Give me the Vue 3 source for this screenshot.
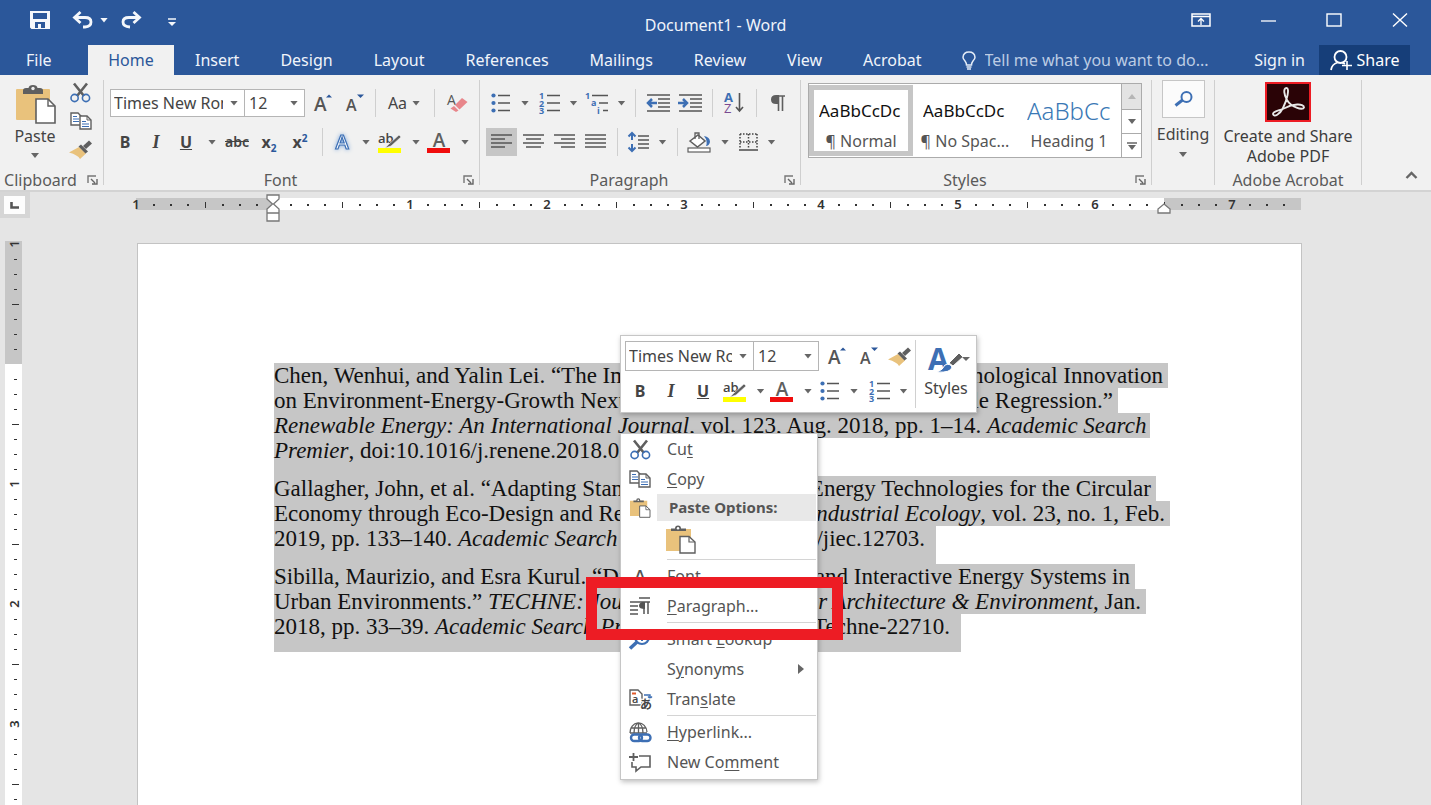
<script setup>
import { h } from 'vue'

const BLUE = '#2b579a'
const MID = '#3d6fb4'
const GREY = '#5f5f5f'
const TAN = '#e9c27c'

const scissors = `<g fill="none" stroke-linecap="butt"><path d="M4 0.5 14 13M17 0.5 7 13" stroke="${GREY}" stroke-width="2.6"/><circle cx="4.6" cy="15" r="3.6" stroke="${MID}" stroke-width="1.6"/><circle cx="16" cy="15" r="3.6" stroke="${MID}" stroke-width="1.6"/></g>`
const copy = `<path d="M1 1H8L11 4V13H1Z" fill="#fff" stroke="${GREY}" stroke-width="1.4"/><path d="M3 4.5H7M3 7H9M3 9.5H9" stroke="${MID}" stroke-width="1.2"/><path d="M10 4H17L21 8V17H10Z" fill="#fff" stroke="${GREY}" stroke-width="1.4"/><path d="M17 4V8H21" fill="none" stroke="${GREY}"/><path d="M12 9.5H16M12 12H19M12 14.5H19" stroke="${MID}" stroke-width="1.2"/>`
const clipboard = `<rect x="1" y="4" width="34" height="31" rx="1" fill="${TAN}"/><path d="M8 9V5.500Q8 3 11 3H13.500Q14 0 18 0T22.500 3H25Q28 3 28 5.500V9Z" fill="${GREY}"/><circle cx="18" cy="3.500" r="1.700" fill="#eee"/><path d="M21 14H33L40 21V38H21Z" fill="#fff" stroke="${GREY}" stroke-width="1.6"/><path d="M33 14V21H40" fill="none" stroke="${GREY}" stroke-width="1.4"/>`
const clipboardOpen = `<path d="M1 4H26V14H16V26H1Z" fill="${TAN}"/><path d="M6 6V3.500H10Q10 .5 13 .5T16 3.500H21V6Z" fill="${GREY}"/><circle cx="13" cy="3.300" r="1.200" fill="#fff"/><path d="M15 11.500H24L30 17V28H15Z" fill="#fff" stroke="${GREY}" stroke-width="1.4"/><path d="M24 11.500V17H30" fill="none" stroke="${GREY}" stroke-width="1.2"/>`
const brush = `<path d="M0 12.500 10 7 17 13.500 11 19Q9 15 0 12.500Z" fill="${TAN}"/><path d="M9.500 6.500 12 4.500 19 11.500 16.500 13.500Z" fill="${GREY}"/><path d="M14 6 20 0.500 23 3.500 17 9Z" fill="${GREY}"/>`
const highlighter = `<text x="1" y="11" font-family="Open Sans, sans-serif" font-size="13" font-weight="600" fill="#444">ab</text><path d="M22 3 24 5 14 14 8 16 12 12Z" fill="${GREY}" stroke="#f0f0f0" stroke-width=".6"/><rect x="1" y="16" width="23" height="5" fill="#ffff00"/>`
const fontColor = `<text x="12" y="15" text-anchor="middle" font-family="Open Sans, sans-serif" font-size="19" font-weight="600" fill="${GREY}">A</text><rect x="0" y="16" width="23" height="5" fill="#f00d0d"/>`
const bullets = `<g fill="${MID}"><circle cx="2.500" cy="2.500" r="2.100"/><circle cx="2.500" cy="10" r="2.100"/><circle cx="2.500" cy="17.500" r="2.100"/></g><path d="M7 2.500H19M7 10H19M7 17.500H19" stroke="#555" stroke-width="1.5"/>`
const numbering = `<g font-family="Open Sans, sans-serif" font-size="9" font-weight="700" fill="${MID}"><text x="0" y="6">1</text><text x="0" y="13.500">2</text><text x="0" y="21">3</text></g><path d="M8 2.500H21M8 10H21M8 17.500H21" stroke="#555" stroke-width="1.5"/>`
const growA = `<text x="0" y="18" font-family="Open Sans, sans-serif" font-size="19" font-weight="600" fill="#555">A</text><path d="M12 4.500 15 1.500 18 4.500Z" fill="${BLUE}"/>`
const shrinkA = `<text x="0" y="18" font-family="Open Sans, sans-serif" font-size="16" font-weight="600" fill="#555">A</text><path d="M11 1.500H18L14.500 5Z" fill="${BLUE}"/>`

const icons = {
  save: [20, 18, `<path fill="#f4f7fb" fill-rule="evenodd" d="M0 0H20V18H1.500L0 16.500ZM3 2V8H17V2ZM5 11V17H8V13H11V17H15V11Z"/>`],
  undo: [21, 18, `<path d="M2 6.500H13Q19 6.500 19 11T13 16H11" fill="none" stroke="#f4f7fb" stroke-width="2.8"/><path d="M8.500 1 2.500 6.500 8.500 12" fill="none" stroke="#f4f7fb" stroke-width="2.8"/>`],
  redo: [21, 18, `<path d="M19 6.500H8Q2 6.500 2 11T9 16" fill="none" stroke="#f4f7fb" stroke-width="2.800"/><path d="M12.500 1 18.500 6.500 12.500 12" fill="none" stroke="#f4f7fb" stroke-width="2.800"/>`],
  custom: [8, 8, `<path d="M0 1H8" stroke="#f4f7fb" stroke-width="1.500"/><path d="M0 4H8L4 8Z" fill="#f4f7fb"/>`],
  ribbonOpt: [20, 14, `<path d="M1 1H19V13H1ZM1 3.500H19" fill="none" stroke="#fff" stroke-width="1.500"/><path d="M10 12V6M7 8.500 10 5.500 13 8.500" fill="none" stroke="#fff" stroke-width="1.300"/>`],
  minimise: [15, 14, `<path d="M0 8H15" stroke="#fff" stroke-width="1.300"/>`],
  maximise: [16, 14, `<rect x="1" y="1" width="14" height="12" fill="none" stroke="#fff" stroke-width="1.400"/>`],
  close: [16, 14, `<path d="M1 .5 15 13.500M15 .5 1 13.500" stroke="#fff" stroke-width="1.400"/>`],
  bulb: [14, 19, `<path d="M4.500 14Q4.500 12 3 10Q1 8 1 6.200Q1.500 1 7 1T13 6.200Q13 8 11 10Q9.500 12 9.500 14Z" fill="none" stroke="#e4ecf7" stroke-width="1.500"/><path d="M4.500 16H9.500M5 18H9" stroke="#e4ecf7" stroke-width="1.300"/>`],
  person: [22, 21, `<circle cx="10.500" cy="7" r="6" fill="none" stroke="#fff" stroke-width="1.800"/><path d="M1 20Q2 14 7.500 12.500M12 12.500 15 14" fill="none" stroke="#fff" stroke-width="1.800"/><path d="M17 11V20M12 15.500H22" stroke="#fff" stroke-width="1.600"/>`],
  paste: [41, 39, clipboard],
  pasteKeep: [31, 29, clipboardOpen],
  cut: [21, 19, scissors],
  copy: [22, 18, copy],
  brush: [23, 19, brush],
  growA: [19, 20, growA],
  shrinkA: [19, 20, shrinkA],
  eraser: [21, 20, `<text x="0" y="12" font-family="Open Sans, sans-serif" font-size="14" fill="#555">A</text><path d="M8 12 15 5 20.500 9 12.500 16.500Z" fill="#e8868b"/><path d="M7 13 11.500 17.500 9 19 3.500 15.500Z" fill="#e8868b"/>`],
  effects: [20, 20, `<text x="10" y="17" text-anchor="middle" font-family="Open Sans, sans-serif" font-size="20" font-weight="600" fill="#fff" stroke="${MID}" stroke-width="1.200" style="filter:drop-shadow(0 0 2px #7fa8dc)">A</text>`],
  highlight: [25, 21, highlighter],
  fontColor: [24, 21, fontColor],
  bullets: [20, 20, bullets],
  numbering: [21, 21, numbering],
  multilevel: [23, 21, `<g font-family="Open Sans, sans-serif" font-size="9" font-weight="700" fill="${MID}"><text x="0" y="6">1</text><text x="6" y="13">a</text><text x="12" y="21">i</text></g><path d="M7 2.500H23M14 10H23M18 17.500H23" stroke="#555" stroke-width="1.500"/>`],
  outdent: [24, 18, `<path d="M1 1H24M12 5H24M12 9H24M12 13H24M1 17H24" stroke="#555" stroke-width="1.500"/><path d="M11 9H3M6 5 2 9 6 13" fill="none" stroke="${MID}" stroke-width="2.500"/>`],
  indent: [24, 18, `<path d="M1 1H24M12 5H24M12 9H24M12 13H24M1 17H24" stroke="#555" stroke-width="1.500"/><path d="M0 9H9M5 5 9 9 5 13" fill="none" stroke="${MID}" stroke-width="2.500"/>`],
  sort: [20, 22, `<text x="0" y="10" font-family="Open Sans, sans-serif" font-size="13" font-weight="700" fill="${MID}">A</text><text x="0" y="21" font-family="Open Sans, sans-serif" font-size="13" fill="#7a4a91">Z</text><path d="M15.500 1V19M12 15 15.500 19 19 15" fill="none" stroke="#555" stroke-width="1.600"/>`],
  pilcrow: [14, 16, `<path d="M6 1H14M7.500 1V16M11.500 1V16" fill="none" stroke="${GREY}" stroke-width="1.600"/><path d="M8 0H5Q0 0 0 4.500T5 9H8Z" fill="${GREY}"/>`],
  left: [21, 16, `<path d="M0 1H21M0 5H14M0 9H21M0 13H14" stroke="#555" stroke-width="1.500"/>`],
  center: [21, 16, `<path d="M0 1H21M3 5H18M0 9H21M3 13H18" stroke="#555" stroke-width="1.500"/>`],
  right: [21, 16, `<path d="M0 1H21M7 5H21M0 9H21M7 13H21" stroke="#555" stroke-width="1.500"/>`],
  justify: [21, 16, `<path d="M0 1H21M0 5H21M0 9H21M0 13H21" stroke="#555" stroke-width="1.500"/>`],
  spacing: [21, 20, `<path d="M4 1V8M4 12V19M.5 4.500 4 1 7.500 4.500M.5 15.500 4 19 7.500 15.500" fill="none" stroke="${MID}" stroke-width="2"/><path d="M10 4H21M10 8H21M10 12H21M10 16H21" stroke="#555" stroke-width="1.500"/>`],
  bucket: [24, 21, `<path d="M3 9 11 3 18 9 10.500 15Z" fill="#fff" stroke="${GREY}" stroke-width="1.500"/><path d="M8 7V1H12V7" fill="none" stroke="${GREY}" stroke-width="1.300"/><path d="M17 4Q23 5 23 10Q22 14 19 14Q21 9 17 4Z" fill="${MID}"/><rect x="1" y="16" width="22" height="4" fill="#fff" stroke="${GREY}" stroke-width="1.200"/>`],
  borders: [19, 18, `<path d="M1 1H19M1 9H19M1 1V16M9.500 1V16M18 1V16" fill="none" stroke="#444" stroke-width="1.500" stroke-dasharray="1.500 1.500"/><path d="M0 17H19" stroke="#555" stroke-width="1.600"/>`],
  up: [8, 5, `<path d="M0 5H8L4 0Z" fill="#b5b5b5"/>`],
  down: [8, 5, `<path d="M0 0H8L4 5Z" fill="#666"/>`],
  more: [10, 8, `<path d="M0 1H10" stroke="#666" stroke-width="1.500"/><path d="M1 3H9L5 8Z" fill="#666"/>`],
  find: [19, 16, `<circle cx="12.500" cy="6" r="5" fill="none" stroke="${MID}" stroke-width="2"/><path d="M8.500 9 1.500 14.500" stroke="${MID}" stroke-width="3"/>`],
  acrobat: [46, 40, `<rect x="1" y="1" width="44" height="38" fill="#2a0306" stroke="#ed1c24" stroke-width="2"/><path d="M21.500 6C18 6 19 13 22 18C26 25 38 29 39 25.500C39 21 27 22 20 26C14 29 8 29 8 32C9 36 15 32 18 26C22 18 25 6 21.500 6Z" fill="none" stroke="#e8e8e8" stroke-width="1.900"/>`],
  launcher: [11, 10, `<path d="M1 8V1H9" fill="none" stroke="#777" stroke-width="1.400"/><path d="M4 4 8 8M10 4V9H5" fill="none" stroke="#666" stroke-width="1.400"/>`],
  collapse: [13, 8, `<path d="M1.500 7 6.500 2 11.500 7" fill="none" stroke="#666" stroke-width="2.400"/>`],
  tabStop: [9, 7, `<path d="M1.500 0V5.500H9" fill="none" stroke="#555" stroke-width="2.600"/>`],
  stylesBig: [42, 29, `<text x="0" y="25" font-family="Open Sans, sans-serif" font-size="30" font-weight="700" fill="${MID}">A</text><path d="M31 8 35 12 25 21 21 18Z" fill="${GREY}" stroke="#fff"/><path d="M9 27Q15 25 17 20Q22 18 24 22Q23 28 9 27Z" fill="${MID}" stroke="#fff"/><path d="M34 12H42L38 16Z" fill="#666"/>`],
  letterA: [18, 18, `<text x="3" y="16" font-family="Open Sans, sans-serif" font-size="18" font-weight="600" fill="#555">A</text>`],
  paragraph: [20, 18, `<path d="M9 1H20M0 5H20M0 9H8M0 13H8M0 17H8" stroke="#555" stroke-width="1.400"/><path d="M14 5V17M18 5V17" stroke="#555" stroke-width="1.500"/><path d="M15 5H12Q9 6 9 9T15 12Z" fill="#555"/>`],
  lookup: [23, 21, `<circle cx="13" cy="8" r="7" fill="none" stroke="${MID}" stroke-width="2.200"/><path d="M8 13 1 19.500" stroke="${MID}" stroke-width="3.500"/><path d="M13 7V12M13 4V5.500" stroke="${MID}" stroke-width="2"/>`],
  translate: [23, 21, `<path d="M1 1H9L13 5V16H1Z" fill="#fff" stroke="${GREY}" stroke-width="1.400"/><path d="M3 4.500H7" stroke="#e05a2b" stroke-width="2"/><text x="3" y="14" font-family="Open Sans, sans-serif" font-size="11" font-weight="600" fill="#444">a</text><path d="M15 6H21V9M19 7.500 21 9.500 23 7.500" fill="none" stroke="${MID}" stroke-width="1.400"/><text x="11" y="20" font-family="Noto Sans CJK JP, sans-serif" font-size="12" font-weight="700" fill="#444" stroke="#fff" stroke-width="2" paint-order="stroke">あ</text>`],
  link: [23, 21, `<g fill="none" stroke="${GREY}" stroke-width="1.300"><path d="M1 11A8 9 0 0 1 18 10M1.500 6H17M1 11H18M9.500 1V11M5 11Q5 3 9.500 1Q14 3 14 11"/></g><g fill="none" stroke="${MID}" stroke-width="2.400"><rect x="2" y="12.500" width="11" height="6.500" rx="3.200"/><rect x="10" y="12.500" width="11.500" height="6.500" rx="3.200"/></g>`],
  comment: [22, 19, `<path d="M10 3H21V14H12L7 18V14H3V9" fill="none" stroke="${GREY}" stroke-width="1.600"/><path d="M4.500 0V8M0 4H9" stroke="${GREY}" stroke-width="1.800"/>`],
  submenu: [6, 10, `<path d="M0 0 6 5 0 10Z" fill="#666"/>`],
  indentTop: [14, 28, `<path d="M1 1H13V5L7.500 10 13 15V27H1V15L6.500 10 1 5ZM1 19H13" fill="#fff" stroke="#777" stroke-width="1.300"/>`],
  indentRight: [14, 11, `<path d="M7 1 13 6V10H1V6Z" fill="#fff" stroke="#777" stroke-width="1.300"/>`]
}

const Icon = (props) => {
  const [w, ht, body] = icons[props.name]
  return h('svg', { width: w, height: ht, viewBox: `0 0 ${w} ${ht}`, 'aria-hidden': 'true', innerHTML: body })
}
Icon.props = ['name']

const tabs = ['Insert', 'Design', 'Layout', 'References', 'Mailings', 'Review', 'View', 'Acrobat']

const paraTop = [
  { icon: 'bullets', caret: true, label: 'Bullets' },
  { icon: 'numbering', caret: true, label: 'Numbering' },
  { icon: 'multilevel', caret: true, label: 'Multilevel list' },
  {},
  { icon: 'outdent', label: 'Decrease indent' },
  { icon: 'indent', label: 'Increase indent' },
  {},
  { icon: 'sort', label: 'Sort' },
  {},
  { icon: 'pilcrow', label: 'Show marks' }
]
const paraBottom = [
  { icon: 'left', label: 'Align left', on: true },
  { icon: 'center', label: 'Center' },
  { icon: 'right', label: 'Align right' },
  { icon: 'justify', label: 'Justify' },
  {},
  { icon: 'spacing', caret: true, label: 'Line spacing' },
  {},
  { icon: 'bucket', caret: true, label: 'Shading' },
  { icon: 'borders', caret: true, label: 'Borders' }
]
const styleItems = [
  { name: '¶ Normal', on: true },
  { name: '¶ No Spac...' },
  { name: 'Heading 1', heading: true }
]

const paragraphs = [
  [
    { width: 894, left: 'Chen, Wenhui, and Yalin Lei. “The Im', right: 'Technological Innovation' },
    { width: 844, left: 'on Environment-Energy-Growth Nexus', right: 'Quantile Regression.”' },
    { width: 876, left: '<i>Renewable Energy: An International Journal</i>, vol. 123, Aug. 2018, pp. 1–14. <i>Academic Search</i>', right: '' },
    { width: 500, left: '<i>Premier</i>, doi:10.1016/j.renene.2018.02', right: '' }
  ],
  [
    { width: 882, left: 'Gallagher, John, et al. “Adapting Stand', right: 'Energy Technologies for the Circular' },
    { width: 896, left: 'Economy through Eco-Design and Rec', right: '<i>Industrial Ecology</i>, vol. 23, no. 1, Feb.' },
    { width: 662, left: '2019, pp. 133–140. <i>Academic Search P</i>', right: '/jiec.12703.' }
  ],
  [
    { width: 861, left: 'Sibilla, Maurizio, and Esra Kurul. “Dis', right: 'and Interactive Energy Systems in' },
    { width: 872, left: 'Urban Environments.” <i>TECHNE: Jour</i>', right: '<i>for Architecture &amp; Environment</i>, Jan.' },
    { width: 687, left: '2018, pp. 33–39. <i>Academic Search Pre</i>', right: 'Techne-22710.' }
  ]
]

const INCH = 137
const hTicks = []
for (let i = -8; i <= 59; i++) {
  if (i === 0) continue
  const x = 137 + Math.round((i * INCH) / 8)
  hTicks.push({ x, kind: i % 8 === 0 ? 'num' : i % 4 === 0 ? 'half' : 'dot', n: Math.abs(i / 8) })
}
const vTicks = []
for (let i = -8; i <= 60; i++) {
  if (i === 0) continue
  vTicks.push({ y: 123 + i * 15, kind: i % 8 === 0 ? 'num' : i % 4 === 0 ? 'half' : 'dot', n: Math.abs(i / 8) })
}
</script>

<template>
  <div class="word">
    <header class="titlebar">
      <div class="quick">
        <button aria-label="Save"><Icon name="save" /></button>
        <button class="undo" aria-label="Undo"><Icon name="undo" /><span class="caret light"></span></button>
        <button aria-label="Redo"><Icon name="redo" /></button>
        <button class="customise" aria-label="Customize toolbar"><Icon name="custom" /></button>
      </div>
      <div class="title">Document1 - Word</div>
      <div class="window">
        <button aria-label="Ribbon options"><Icon name="ribbonOpt" /></button>
        <button aria-label="Minimize"><Icon name="minimise" /></button>
        <button aria-label="Maximize"><Icon name="maximise" /></button>
        <button aria-label="Close"><Icon name="close" /></button>
      </div>
    </header>

    <nav class="tabs">
      <button class="file">File</button>
      <button class="home">Home</button>
      <button v-for="t in tabs" :key="t" class="tab">{{ t }}</button>
      <label class="tell"><Icon name="bulb" /><input type="text" aria-label="Tell me" placeholder="Tell me what you want to do..." /></label>
      <button class="sign">Sign in</button>
      <button class="share"><Icon name="person" />Share</button>
    </nav>

    <section class="ribbon">
      <div class="group clip">
        <div class="body clip-body">
          <button class="paste"><Icon name="paste" /><span>Paste</span><span class="caret"></span></button>
          <div class="clip-tools">
            <button aria-label="Cut"><Icon name="cut" /></button>
            <button aria-label="Copy"><Icon name="copy" /></button>
            <button aria-label="Format painter"><Icon name="brush" /></button>
          </div>
        </div>
        <div class="foot"><span>Clipboard</span><button class="launch" aria-label="Clipboard settings"><Icon name="launcher" /></button></div>
      </div>

      <div class="group font">
        <div class="body">
          <div class="row font-top">
            <div class="combo"><select aria-label="Font"><option>Times New Roman</option></select><span class="caret"></span></div>
            <div class="combo second"><select aria-label="Font size"><option>12</option></select><span class="caret"></span></div>
            <button aria-label="Grow font"><Icon name="growA" /></button>
            <button aria-label="Shrink font"><Icon name="shrinkA" /></button>
            <span class="sep"></span>
            <button class="tight">Aa<span class="caret"></span></button>
            <span class="sep"></span>
            <button aria-label="Clear formatting"><Icon name="eraser" /></button>
          </div>
          <div class="row font-bottom">
            <button><b>B</b></button>
            <button><i class="ital">I</i></button>
            <button class="wide"><b><u>U</u></b><span class="caret"></span></button>
            <button class="strike"><s>abc</s></button>
            <button><b>x<sub>2</sub></b></button>
            <button><b>x<sup>2</sup></b></button>
            <span class="sep"></span>
            <button aria-label="Text effects"><Icon name="effects" /><span class="caret"></span></button>
            <button aria-label="Highlight"><Icon name="highlight" /><span class="caret"></span></button>
            <button aria-label="Font color"><Icon name="fontColor" /><span class="caret"></span></button>
          </div>
        </div>
        <div class="foot"><span>Font</span><button class="launch" aria-label="Font settings"><Icon name="launcher" /></button></div>
      </div>

      <div class="group para">
        <div class="body">
          <div class="row para-top">
            <template v-for="(t, i) in paraTop" :key="i">
              <button v-if="t.icon" :aria-label="t.label"><Icon :name="t.icon" /><span v-if="t.caret" class="caret"></span></button>
              <span v-else class="sep"></span>
            </template>
          </div>
          <div class="row para-bottom">
            <template v-for="(t, i) in paraBottom" :key="i">
              <button v-if="t.icon" :class="{ on: t.on }" :aria-label="t.label"><Icon :name="t.icon" /><span v-if="t.caret" class="caret"></span></button>
              <span v-else class="sep"></span>
            </template>
          </div>
        </div>
        <div class="foot"><span>Paragraph</span><button class="launch" aria-label="Paragraph settings"><Icon name="launcher" /></button></div>
      </div>

      <div class="group styles">
        <div class="body">
          <div class="gallery">
            <button v-for="s in styleItems" :key="s.name" class="style" :class="{ on: s.on }">
              <span class="sample" :class="{ heading: s.heading }">AaBbCcDc</span>
              <span class="name">{{ s.name }}</span>
            </button>
            <div class="scroll">
              <button class="off" aria-label="Scroll up"><Icon name="up" /></button>
              <button aria-label="Scroll down"><Icon name="down" /></button>
              <button aria-label="More styles"><Icon name="more" /></button>
            </div>
          </div>
        </div>
        <div class="foot"><span>Styles</span><button class="launch" aria-label="Styles settings"><Icon name="launcher" /></button></div>
      </div>

      <div class="group editing">
        <button class="edit"><span class="box"><Icon name="find" /></span><span>Editing</span><span class="caret"></span></button>
      </div>

      <div class="group adobe">
        <button class="body pdf"><Icon name="acrobat" /><span>Create and Share<br />Adobe PDF</span></button>
        <div class="foot"><span>Adobe Acrobat</span></div>
      </div>
      <button class="collapse" aria-label="Collapse ribbon"><Icon name="collapse" /></button>
    </section>

    <div class="ruler-row">
      <button class="tabstop" aria-label="Tab stop"><span><Icon name="tabStop" /></span></button>
      <div class="hruler">
        <div class="margin start"></div>
        <div class="live"></div>
        <div class="margin end"></div>
        <svg class="ticks" aria-hidden="true">
          <template v-for="t in hTicks" :key="t.x">
            <text v-if="t.kind === 'num'" :x="t.x" y="11" text-anchor="middle">{{ t.n }}</text>
            <rect v-else-if="t.kind === 'half'" :x="t.x" y="4" width="1" height="6" />
            <rect v-else :x="t.x" y="6" width="2" height="2" />
          </template>
        </svg>
        <Icon class="mark first" name="indentTop" />
        <Icon class="mark last" name="indentRight" />
      </div>
    </div>

    <main class="work">
      <div class="vruler">
        <div class="vmargin"></div>
        <svg class="ticks" aria-hidden="true">
          <template v-for="t in vTicks" :key="t.y">
            <text v-if="t.kind === 'num'" :transform="`translate(14 ${t.y}) rotate(-90)`" text-anchor="middle">{{ t.n }}</text>
            <rect v-else-if="t.kind === 'half'" x="7" :y="t.y" width="7" height="1" />
            <rect v-else x="9" :y="t.y" width="3" height="1" />
          </template>
        </svg>
      </div>

      <article class="page">
        <div v-for="(p, i) in paragraphs" :key="i" class="cite">
          <div v-for="(l, j) in p" :key="j" class="line" :style="{ width: l.width + 'px' }">
            <span v-html="l.left"></span><span v-html="l.right"></span>
          </div>
        </div>
      </article>

      <div class="mini">
        <div class="mini-main">
          <div class="mini-top">
            <div class="combo"><select aria-label="Mini font"><option>Times New Roman</option></select><span class="caret"></span></div>
            <div class="combo second"><select aria-label="Mini font size"><option>12</option></select><span class="caret"></span></div>
            <button aria-label="Grow"><Icon name="growA" /></button>
            <button aria-label="Shrink"><Icon name="shrinkA" /></button>
            <button aria-label="Painter"><Icon name="brush" /></button>
          </div>
          <div class="mini-bottom">
            <button><b>B</b></button>
            <button><i class="ital">I</i></button>
            <button><b><u>U</u></b></button>
            <button aria-label="Highlight text"><Icon name="highlight" /><span class="caret"></span></button>
            <button aria-label="Text color"><Icon name="fontColor" /><span class="caret"></span></button>
            <button aria-label="Bullet list"><Icon name="bullets" /><span class="caret"></span></button>
            <button aria-label="Number list"><Icon name="numbering" /><span class="caret"></span></button>
          </div>
        </div>
        <button class="mini-styles"><Icon name="stylesBig" /><span>Styles</span></button>
      </div>

      <div class="menu" role="menu">
        <button class="item"><Icon name="cut" /><span>Cu<u>t</u></span></button>
        <button class="item"><Icon name="copy" /><span><u>C</u>opy</span></button>
        <div class="options">
          <svg width="22" height="20" viewBox="0 0 31 29" aria-hidden="true" v-html="icons.pasteKeep[2]"></svg>
          <span>Paste Options:</span>
        </div>
        <button class="keep" aria-label="Keep source formatting"><Icon name="pasteKeep" /></button>
        <hr />
        <button class="item"><Icon name="letterA" /><span><u>F</u>ont...</span></button>
        <button class="item"><Icon name="paragraph" /><span><u>P</u>aragraph...</span></button>
        <hr />
        <button class="item"><Icon name="lookup" /><span>Smart <u>L</u>ookup</span></button>
        <button class="item"><i></i><span>S<u>y</u>nonyms</span><Icon class="sub" name="submenu" /></button>
        <button class="item"><Icon name="translate" /><span>Tran<u>s</u>late</span></button>
        <hr />
        <button class="item"><Icon name="link" /><span><u>H</u>yperlink...</span></button>
        <button class="item"><Icon name="comment" /><span>New Co<u>m</u>ment</span></button>
      </div>
      <div class="callout"></div>
    </main>
  </div>
</template>

<style>
body { background: #e5e5e5; }
</style>

<style scoped>
.word {
  min-height: 100vh;
  display: flex;
  flex-direction: column;
  font-family: "Noto Sans", "Open Sans", sans-serif;
  font-size: 16px;
  line-height: 20px;
  color: #444;
  background: #e5e5e5;
  overflow: hidden;
}
.word * { box-sizing: border-box; }
button {
  font: inherit;
  color: inherit;
  border: 0;
  padding: 0;
  background: none;
  display: flex;
  align-items: center;
  justify-content: center;
  white-space: nowrap;
}
svg { flex: none; display: block; overflow: visible; }
.caret {
  flex: none;
  width: 8px;
  height: 5px;
  background: #666;
  clip-path: polygon(0 0, 100% 0, 50% 100%);
}
.caret.light { background: #f4f7fb; }

.titlebar {
  height: 45px;
  background: #2b579a;
  color: #f0f4fa;
  display: grid;
  grid-template-columns: 1fr auto 1fr;
  align-items: center;
}
.quick { display: flex; align-items: center; padding: 0 0 5px 30px; }
.undo { margin: 0 13px 0 22px; gap: 7px; }
.customise { margin: 4px 0 0 26px; }
.title { padding-top: 4px; }
.window { display: flex; justify-content: flex-end; gap: 50px; padding: 0 23px 5px 0; }

.tabs {
  height: 30px;
  background: #2b579a;
  color: #f0f4fa;
  display: flex;
  align-items: stretch;
}
.file { width: 88px; justify-content: flex-start; padding-left: 26px; }
.home { width: 86px; background: #f1f1f1; color: #2b579a; }
.tab { padding: 0 20px 0 21px; }
.tell { display: flex; align-items: center; gap: 9px; margin-left: 20px; flex: 1; }
.tell input {
  flex: 1;
  min-width: 0;
  border: 0;
  padding: 0;
  background: none;
  font: inherit;
  color: #fff;
}
.tell input::placeholder { color: #bccce4; opacity: 1; }
.sign { margin-right: 14px; }
.share { width: 91px; margin-right: 21px; background: #163e79; color: #fff; gap: 5px; }

.ribbon {
  height: 117px;
  background: #f1f1f1;
  border-bottom: 2px solid #d3d3d3;
  display: flex;
  padding: 5px 0;
}
.group {
  flex: none;
  display: flex;
  flex-direction: column;
  border-right: 1px solid #cfcfcf;
}
.body { height: 90px; flex: none; }
.foot {
  height: 20px;
  display: grid;
  grid-template-columns: 1fr 22px;
  align-items: center;
  text-align: center;
  white-space: nowrap;
  color: #5a5a5a;
}
.launch { height: 20px; }
.clip { width: 104px; }
.font { width: 376px; }
.para { width: 321px; }
.styles { width: 351px; }
.editing { width: 63px; }
.adobe { width: 147px; }
.adobe .foot { grid-template-columns: 1fr; }

.clip-body { display: flex; padding-left: 13px; }
.paste { flex-direction: column; justify-content: flex-start; width: 44px; padding-top: 5px; }
.paste span:nth-child(2) { margin: 2px 0 7px; }
.clip-tools { display: flex; flex-direction: column; align-items: center; gap: 10px; padding: 3px 0 0 12px; }

.row, .mini-top, .mini-bottom { display: grid; }
.row { height: 28px; margin-left: 6px; }
.row button, .mini-bottom button { gap: 10px; }
.font-top { margin-top: 9px; grid-template-columns: 135px 60px 36px 28px 12px 46px 14px 32px; }
.font-bottom { margin-top: 11px; grid-template-columns: 30px 32px 48px 34px 30px 32px 12px 46px 49px 50px; }
.para-top { margin-top: 9px; grid-template-columns: 48px 48px 46px 14px 32px 32px 12px 32px 12px 32px; }
.para-bottom { margin-top: 11px; grid-template-columns: 31px 32px 31px 31px 12px 48px 12px 50px 48px; }
.row .tight { gap: 5px; }
.row .wide { gap: 16px; padding-left: 4px; }
.on { background: #c6c6c6; }
.sep { width: 1px; background: #cfcfcf; justify-self: center; }
.ital { font-family: "Liberation Serif", serif; font-weight: 700; font-size: 18px; }
.strike { font-size: 14px; font-weight: 600; }
sub, sup { font-size: 10px; line-height: 0; color: #2b579a; }
.combo {
  display: flex;
  align-items: center;
  min-width: 0;
  background: #fff;
  border: 1px solid #b5b5b5;
  padding: 0 6px 0 3px;
}
.combo.second { border-left: 0; padding-left: 4px; }
.combo select {
  flex: 1;
  min-width: 0;
  border: 0;
  padding: 0;
  margin-right: 7px;
  background: none;
  appearance: none;
  font: inherit;
  color: #444;
  outline: 0;
}

.gallery {
  display: flex;
  height: 75px;
  margin: 3px 9px 0 7px;
  background: #fff;
  border: 1px solid #ababab;
}
.style {
  flex: 1;
  min-width: 0;
  flex-direction: column;
  border: 5px solid transparent;
  margin: 1px 0;
  background: #fff;
}
.style.on { border-color: #c6c6c6; }
.sample { width: 84px; overflow: hidden; height: 40px; line-height: 40px; font-size: 17px; color: #111; text-align: left; }
.sample.heading { font-size: 24px; color: #3a78b5; font-weight: 300; }
.name { height: 20px; color: #555; }
.scroll { width: 20px; display: grid; grid-template-rows: 25px 24px 24px; border-left: 1px solid #ababab; }
.scroll button + button { border-top: 1px solid #ababab; }
.scroll .off { background: #e3e3e3; }

.edit { flex-direction: column; margin: 0 auto; }
.box {
  width: 43px;
  height: 38px;
  background: #fbfbfb;
  border: 1px solid #c6c6c6;
  display: flex;
  align-items: center;
  justify-content: center;
  margin-bottom: 6px;
}
.edit .caret { margin-top: 8px; }
.pdf { flex-direction: column; justify-content: flex-start; padding-top: 2px; gap: 4px; color: #3c3c3c; }
.collapse { margin: 0 13px 0 auto; align-self: flex-end; height: 20px; }

.ruler-row { height: 50px; display: flex; align-items: flex-start; }
.tabstop { width: 30px; height: 26px; background: #d6d6d6; padding-right: 2px; }
.tabstop span { width: 21px; height: 18px; background: #fdfdfd; display: flex; align-items: center; justify-content: center; }
.hruler { position: relative; flex: 1; height: 12px; margin: 6px 130px 0 106px; display: flex; }
.margin { width: 138px; background: #c6c6c6; }
.margin.end { width: 137px; }
.live { flex: 1; background: #fff; }
.ticks { position: absolute; inset: 0; width: 100%; height: 100%; fill: #333; overflow: hidden; }
.ticks text { font-size: 13px; font-weight: 600; }
.hruler .ticks { overflow: visible; }
.mark { position: absolute; }
.mark.first { left: 130px; top: -4px; }
.mark.last { right: 130px; top: 5px; }

.work { position: relative; flex: 1; display: flex; }
.vruler { position: relative; flex: none; width: 17px; margin: -1px 0 0 5px; background: #fff; }
.vmargin { height: 123px; background: #c6c6c6; }
.page {
  flex: 1;
  margin: 1px 129px 0 115px;
  padding: 119px 0 40px 136px;
  background: #fff;
  border: 1px solid #c3c3c3;
  border-bottom: 0;
  font-family: "Liberation Serif", serif;
  font-size: 23px;
  color: #111;
}
.line {
  display: flex;
  justify-content: space-between;
  height: 25px;
  line-height: 26px;
  padding-right: 5px;
  white-space: pre;
  background: #c6c6c6;
}
.line:last-child { height: 38px; padding-right: 11px; }

.mini, .menu { position: absolute; left: 620px; background: #fff; border: 1px solid #c6c6c6; box-shadow: 1px 2px 5px rgba(0, 0, 0, 0.25); }
.mini { top: 93px; width: 357px; height: 78px; display: flex; padding: 4px 0 4px 4px; }
.mini-main { border-right: 1px solid #d0d0d0; }
.mini-top { height: 30px; margin-top: 1px; grid-template-columns: 129px 65px 36px 28px 32px; }
.mini-bottom { height: 30px; margin-top: 5px; grid-template-columns: 30px 32px 32px 48px 48px 48px 50px; }
.mini-styles { flex: 1; flex-direction: column; padding: 1px 0 6px; gap: 4px; }
.mini-styles svg { margin-left: 6px; }

.menu { top: 191px; width: 198px; padding: 0 1px 2px; color: #555; }
.item {
  width: 100%;
  height: 30px;
  display: grid;
  grid-template-columns: 36px 9px 1fr 18px;
  justify-items: center;
}
.item span { grid-column: 3; justify-self: start; }
.sub { grid-column: 4; justify-self: start; }
.item u { text-underline-offset: 2px; }
.options { height: 27px; display: grid; grid-template-columns: 35px 1fr; align-items: center; justify-items: center; }
.options span { width: 100%; height: 27px; line-height: 27px; background: #e8e8e8; padding-left: 12px; font-size: 15px; font-weight: 700; }
.keep { height: 37px; margin-left: 43px; }
hr { margin: 1px 0 1px 45px; border: 0; height: 1px; background: #d4d4d4; }
.callout { position: absolute; left: 586px; top: 335px; width: 257px; height: 63px; border: 11px solid #ed1c24; }
</style>
